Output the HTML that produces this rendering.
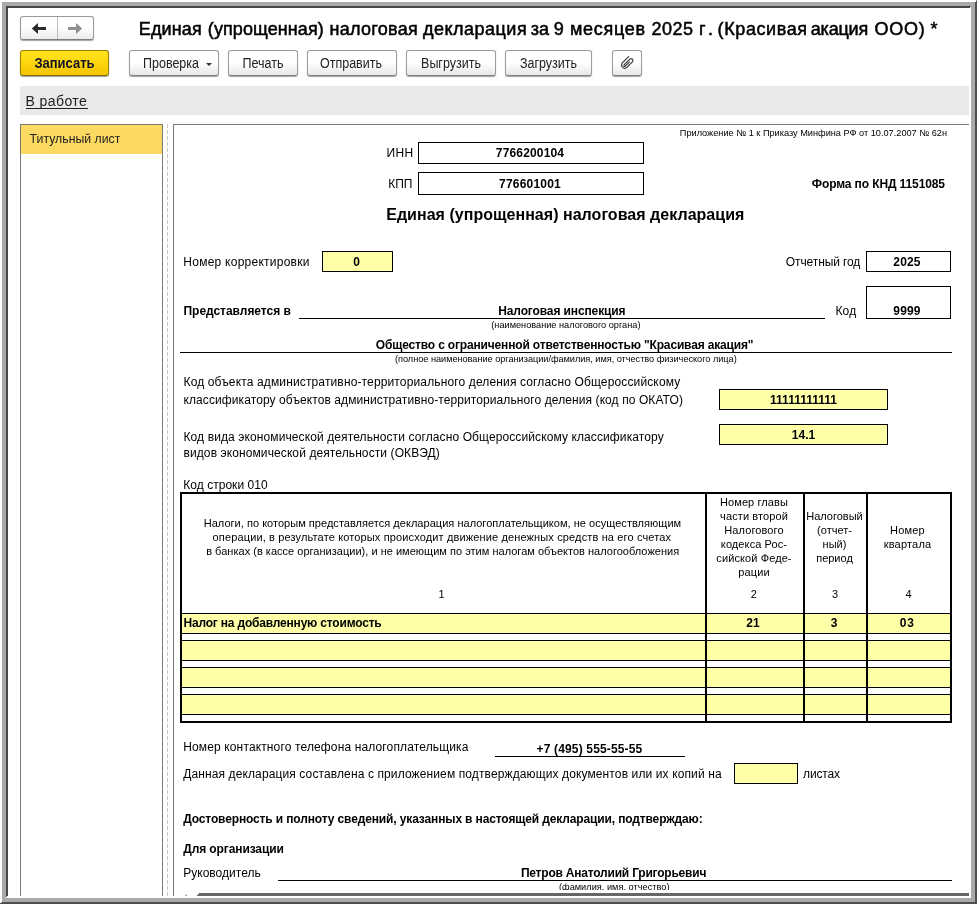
<!DOCTYPE html>
<html>
<head>
<meta charset="utf-8">
<title>1C</title>
<style>
html,body{margin:0;padding:0;}
body{width:977px;height:904px;position:relative;overflow:hidden;background:#fff;font-family:"Liberation Sans",sans-serif;color:#000;}
.a{position:absolute;white-space:nowrap;}
/* window frame */
/* toolbar */
.btn{position:absolute;box-sizing:border-box;height:26px;top:50px;border:1px solid #9c9c9c;border-bottom-color:#808080;border-radius:3px;background:linear-gradient(#ffffff 0%,#ffffff 48%,#e7e7e7 100%);box-shadow:0 1px 1px rgba(0,0,0,.38);font-size:12.5px;line-height:24px;text-align:center;color:#222;}
.bt{display:inline-block;transform:scaleY(1.1);transform-origin:50% 58%;position:relative;top:1px;}
.t12{font-size:12px;line-height:14px;}
.b{font-weight:bold;}
.box{position:absolute;box-sizing:border-box;border:1px solid #000;background:#fff;font-size:12px;font-weight:bold;text-align:center;}
.y{background:#ffffa8;}
.hl{position:absolute;height:1px;background:#000;}
.vl{position:absolute;width:1px;background:#000;}
.s9{font-size:9.2px;line-height:10px;}
.s11{font-size:11px;line-height:14px;text-align:center;}
</style>
</head>
<body>
<div id="root" style="position:absolute;left:0;top:0;width:977px;height:904px;will-change:transform;">
<!-- frame -->
<div class="a" style="left:2px;top:2px;width:973px;height:900px;background:#a9a9a9;"></div>
<div class="a" style="left:6px;top:6px;width:965px;height:892px;background:#fff;"></div>
<div class="a" style="left:6px;top:6px;width:964px;height:2px;background:#464646;"></div>
<div class="a" style="left:6px;top:6px;width:2px;height:890px;background:#464646;"></div>
<div class="a" style="left:970px;top:6px;width:1px;height:1px;background:#6a6a6a;"></div>
<div class="a" style="left:6px;top:896px;width:1px;height:1px;background:#6a6a6a;"></div>
<div class="a" style="left:975px;top:1px;width:2px;height:903px;background:#4e4e4e;"></div>
<div class="a" style="left:0px;top:902px;width:977px;height:2px;background:#4e4e4e;"></div>
<div class="a" style="left:975px;top:0px;width:1px;height:2px;background:#fff;"></div>
<div class="a" style="left:976px;top:0px;width:1px;height:1px;background:#9a9a9a;"></div>
<div class="a" style="left:0px;top:902px;width:1px;height:1px;background:#fff;"></div>
<div class="a" style="left:1px;top:902px;width:1px;height:1px;background:#9a9a9a;"></div>

<!-- nav buttons -->
<div id="nav" class="a" style="left:20px;top:16px;width:74px;height:24px;box-sizing:border-box;border:1px solid #9a9a9a;border-bottom-color:#7e7e7e;border-radius:3px;background:linear-gradient(#fff 0%,#fff 45%,#ebebeb 100%);box-shadow:0 1px 1px rgba(0,0,0,.38);"></div>
<div class="a" style="left:57px;top:17px;width:1px;height:22px;background:#bdbdbd;"></div>
<svg class="a" style="left:20px;top:16px" width="74" height="24" viewBox="0 0 74 24"><path d="M11.8 12.5 L18 7 L18 11 L26 11 L26 14 L18 14 L18 18 Z" fill="#2b2b2b"/><path d="M62.2 12.5 L56 7 L56 11 L48 11 L48 14 L56 14 L56 18 Z" fill="#8e8e8e"/></svg>

<!-- title -->
<div class="a" id="title" style="left:0;top:18px;width:977px;height:22px;font-size:18px;line-height:22px;-webkit-text-stroke:0.5px #000;"><span class="a" style="left:138.8px;top:0;letter-spacing:0.14px">Единая</span><span class="a" style="left:207.8px;top:0;letter-spacing:0.09px">(упрощенная)</span><span class="a" style="left:329.6px;top:0;letter-spacing:0.27px">налоговая</span><span class="a" style="left:422.9px;top:0;letter-spacing:0.5px">декларация</span><span class="a" style="left:530.8px;top:0;letter-spacing:0px">за</span><span class="a" style="left:553.7px;top:0;letter-spacing:0px">9</span><span class="a" style="left:569.9px;top:0;letter-spacing:0.74px">месяцев</span><span class="a" style="left:651.5px;top:0;letter-spacing:0.45px">2025</span><span class="a" style="left:699px;top:0;letter-spacing:4.6px">г.</span><span class="a" style="left:717.6px;top:0;letter-spacing:0.6px">(Красивая</span><span class="a" style="left:810.8px;top:0;letter-spacing:-0.2px">акация</span><span class="a" style="left:874.4px;top:0;letter-spacing:0.8px">ООО)</span><span class="a" style="left:930.6px;top:0;letter-spacing:0px">*</span></div>

<!-- buttons -->
<div class="btn b" id="bsave" style="left:20px;width:89px;border-color:#9a7b05;border-bottom-color:#86690a;background:linear-gradient(#ffe31c 0%,#fdd80d 45%,#f4c400 100%);color:#141428;font-size:13px;"><span class="bt" style="letter-spacing:0">Записать</span></div>
<div class="btn" style="left:129px;width:90px;"><span class="bt" style="position:relative;left:-3px">Проверка</span><span style="position:absolute;left:76px;top:12px;width:0;height:0;border-left:3.5px solid transparent;border-right:3.5px solid transparent;border-top:3.5px solid #333;"></span></div>
<div class="btn" style="left:228px;width:70px;"><span class="bt">Печать</span></div>
<div class="btn" style="left:307px;width:90px;"><span class="bt" style="left:-1px">Отправить</span></div>
<div class="btn" style="left:406px;width:90px;"><span class="bt">Выгрузить</span></div>
<div class="btn" style="left:505px;width:87px;"><span class="bt">Загрузить</span></div>
<div class="btn" style="left:612px;width:30px;"><svg style="position:absolute;left:-1px;top:-1px" width="30" height="26" viewBox="0 0 30 26"><g transform="translate(8.3,14.9) rotate(-45) scale(0.9)"><path d="M13.1 0 L3.55 0 A3.55 3.55 0 0 0 3.55 7.1 L11.95 7.1 A2.05 2.05 0 0 0 11.95 3 L3 3 A0.9 0.9 0 0 0 3 4.8 L9.6 4.8" fill="none" stroke="#3a3a3a" stroke-width="1.3" stroke-linecap="round"/></g></svg></div>

<!-- status band -->
<div class="a" style="left:20px;top:86px;width:949px;height:29px;background:#e9e9e9;"></div>
<div class="a" id="inwork" style="left:25.6px;top:93px;font-size:14px;line-height:16px;letter-spacing:.4px;color:#1e1e1e;">В работе</div>
<div class="hl" style="left:26px;top:108px;width:62px;background:#1e1e1e;"></div>

<!-- left panel -->
<div class="a" style="left:20px;top:124px;width:143px;height:772px;box-sizing:border-box;border:1px solid #7a7a7a;border-bottom:none;background:#fff;"></div>
<div class="a" style="left:21px;top:125px;width:141px;height:29px;background:#fcda62;"></div>
<div class="a" id="tit" style="left:29.6px;top:132px;font-size:12.3px;line-height:14px;color:#1e1e1e;transform:scaleY(1.1);transform-origin:50% 70%;">Титульный лист</div>
<!-- splitter -->
<div class="a" style="left:167px;top:124px;width:1px;height:772px;background:repeating-linear-gradient(#c8c8c8 0,#c8c8c8 4px,#fff 4px,#fff 6px);"></div>
<!-- right panel -->
<div class="a" style="left:173px;top:124px;width:796px;height:1px;background:#7a7a7a;"></div>
<div class="a" style="left:173px;top:124px;width:1px;height:772px;background:#7a7a7a;"></div>

<!-- FORM -->
<div class="a s9" id="pril" style="left:679.8px;top:128px;">Приложение № 1 к Приказу Минфина РФ от 10.07.2007 № 62н</div>
<div class="a t12" style="left:386.6px;top:146px;letter-spacing:.25px">ИНН</div>
<div class="box" style="left:418px;top:142px;width:226px;height:22px;line-height:20px;"><span style="letter-spacing:.16px;position:relative;left:-1px">7766200104</span></div>
<div class="a t12" style="left:388.2px;top:177px;">КПП</div>
<div class="box" style="left:418px;top:172px;width:226px;height:23px;line-height:23px;"><span style="letter-spacing:.21px;position:relative;left:-1px">776601001</span></div>
<div class="a t12 b" id="knd" style="left:811.8px;top:177px;letter-spacing:-.11px">Форма по КНД 1151085</div>
<div class="a b" id="h1" style="left:386.2px;top:206px;font-size:16px;line-height:18px;letter-spacing:.03px">Единая (упрощенная) налоговая декларация</div>

<div class="a t12" style="left:183.3px;top:255px;letter-spacing:.25px">Номер корректировки</div>
<div class="box y" style="left:322px;top:251px;width:71px;height:21px;line-height:21px;"><span style="position:relative;left:-1px">0</span></div>
<div class="a t12" style="left:785.8px;top:255px;letter-spacing:-.1px">Отчетный год</div>
<div class="box" style="left:866px;top:251px;width:85px;height:21px;line-height:21px;letter-spacing:.19px"><span style="position:relative;left:-1.5px">2025</span></div>

<div class="a t12 b" style="left:183.5px;top:304px;letter-spacing:-.03px">Представляется в</div>
<div class="a t12 b" style="left:498.2px;top:304px;letter-spacing:-.12px">Налоговая инспекция</div>
<div class="hl" style="left:299px;top:318px;width:526px;"></div>
<div class="a t12" style="left:835.4px;top:304px;letter-spacing:.2px">Код</div>
<div class="box" style="left:866px;top:286px;width:85px;height:33px;line-height:49px;letter-spacing:.19px"><span style="position:relative;left:-1.5px">9999</span></div>
<div class="a s9" style="left:491.3px;top:320px;">(наименование налогового органа)</div>
<div class="a t12 b" style="left:375.8px;top:338px;letter-spacing:-.164px">Общество с ограниченной ответственностью "Красивая акация"</div>
<div class="hl" style="left:180px;top:352px;width:772px;"></div>
<div class="a s9" style="left:395px;top:354px;letter-spacing:-.03px">(полное наименование организации/фамилия, имя, отчество физического лица)</div>

<div class="a t12" style="left:183.5px;top:375px;letter-spacing:.138px">Код объекта административно-территориального деления согласно Общероссийскому</div>
<div class="a t12" style="left:183.5px;top:393px;letter-spacing:.093px">классификатору объектов административно-территориального деления (код по ОКАТО)</div>
<div class="box y" style="left:719px;top:389px;width:169px;height:21px;line-height:21px;">11111111111</div>
<div class="a t12" style="left:183.5px;top:430px;letter-spacing:.105px">Код вида экономической деятельности согласно Общероссийскому классификатору</div>
<div class="a t12" style="left:183.5px;top:446px;letter-spacing:.098px">видов экономической деятельности (ОКВЭД)</div>
<div class="box y" style="left:719px;top:424px;width:169px;height:21px;line-height:21px;">14.1</div>
<div class="a t12" style="left:183.3px;top:478px;letter-spacing:.03px">Код строки 010</div>

<!-- TABLE -->
<div id="tbl" class="a" style="left:180px;top:492px;width:772px;height:231px;box-sizing:border-box;border:2px solid #000;background:#fff;"></div>
<div class="a" style="left:182px;top:614px;width:768px;height:19px;background:#ffffa8;"></div>
<div class="a" style="left:182px;top:641px;width:768px;height:19px;background:#ffffa8;"></div>
<div class="a" style="left:182px;top:668px;width:768px;height:19px;background:#ffffa8;"></div>
<div class="a" style="left:182px;top:695px;width:768px;height:19px;background:#ffffa8;"></div>
<div class="hl" style="left:182px;top:613px;width:768px;"></div>
<div class="hl" style="left:182px;top:633px;width:768px;"></div>
<div class="hl" style="left:182px;top:640px;width:768px;"></div>
<div class="hl" style="left:182px;top:660px;width:768px;"></div>
<div class="hl" style="left:182px;top:667px;width:768px;"></div>
<div class="hl" style="left:182px;top:687px;width:768px;"></div>
<div class="hl" style="left:182px;top:694px;width:768px;"></div>
<div class="hl" style="left:182px;top:714px;width:768px;"></div>
<div class="vl" style="left:705px;top:494px;width:2px;height:227px;"></div>
<div class="vl" style="left:803px;top:494px;width:2px;height:227px;"></div>
<div class="vl" style="left:866px;top:494px;width:2px;height:227px;"></div>

<div class="a s11" style="left:203.7px;top:516px;letter-spacing:.03px;">Налоги, по которым представляется декларация налогоплательщиком, не осуществляющим</div>
<div class="a s11" style="left:212.6px;top:530px;letter-spacing:.138px;">операции, в результате которых происходит движение денежных средств на его счетах</div>
<div class="a s11" style="left:206.2px;top:544px;letter-spacing:.018px;">в банках (в кассе организации), и не имеющим по этим налогам объектов налогообложения</div>
<div class="a s11" style="left:706px;top:495px;width:96px;letter-spacing:.1px">Номер главы<br>части второй<br>Налогового<br>кодекса Рос-<br>сийской Феде-<br>рации</div>
<div class="a s11" style="left:804px;top:509px;width:61px;">Налоговый<br>(отчет-<br>ный)<br>период</div>
<div class="a s11" style="left:866.5px;top:523px;width:82px;letter-spacing:.2px">Номер<br>квартала</div>
<div class="a s11" style="left:180px;top:587px;width:523px;">1</div>
<div class="a s11" style="left:705.7px;top:587px;width:96px;">2</div>
<div class="a s11" style="left:804.5px;top:587px;width:61px;">3</div>
<div class="a s11" style="left:867.5px;top:587px;width:82px;">4</div>
<div class="a t12 b" style="left:183.5px;top:616px;letter-spacing:-.193px">Налог на добавленную стоимость</div>
<div class="a t12 b" style="left:705px;top:616px;width:96px;text-align:center;">21</div>
<div class="a t12 b" style="left:803.5px;top:616px;width:61px;text-align:center;">3</div>
<div class="a t12 b" style="left:866.3px;top:616px;width:82px;text-align:center;letter-spacing:.8px">03</div>

<!-- below table -->
<div class="a t12" style="left:183.2px;top:740px;letter-spacing:.138px">Номер контактного телефона налогоплательщика</div>
<div class="a t12 b" style="left:536.6px;top:742px;letter-spacing:.153px">+7 (495) 555-55-55</div>
<div class="hl" style="left:495px;top:756px;width:190px;"></div>
<div class="a t12" style="left:183.2px;top:767px;letter-spacing:.117px">Данная декларация составлена с приложением подтверждающих документов или их копий на</div>
<div class="box y" style="left:734px;top:763px;width:64px;height:21px;"></div>
<div class="a t12" style="left:803.1px;top:767px;letter-spacing:-.19px">листах</div>
<div class="a t12 b" style="left:183.2px;top:812px;letter-spacing:-.134px">Достоверность и полноту сведений, указанных в настоящей декларации, подтверждаю:</div>
<div class="a t12 b" style="left:183.2px;top:842px;letter-spacing:-.1px">Для организации</div>
<div class="a t12" style="left:183.2px;top:866px;letter-spacing:.02px">Руководитель</div>
<div class="a t12 b" style="left:520.9px;top:866px;letter-spacing:-.21px">Петров Анатолиий Григорьевич</div>
<div class="hl" style="left:278px;top:880px;width:674px;"></div>
<div class="a s9" style="left:559px;top:882px;letter-spacing:.02px">(фамилия, имя, отчество)</div>

<!-- bottom scrollbar -->
<div class="a" style="left:174px;top:890px;width:795px;height:8px;background:#fff;"></div>
<svg class="a" style="left:174px;top:890px" width="795" height="8" viewBox="174 890 795 8" shape-rendering="crispEdges"><polygon points="199.4,893 969,893 969,896 196.6,896" fill="#666" shape-rendering="geometricPrecision"/><rect x="186" y="894" width="1" height="1" fill="#bbb"/><rect x="185" y="895" width="2" height="1" fill="#aaa"/></svg>
</div>
</body>
</html>
